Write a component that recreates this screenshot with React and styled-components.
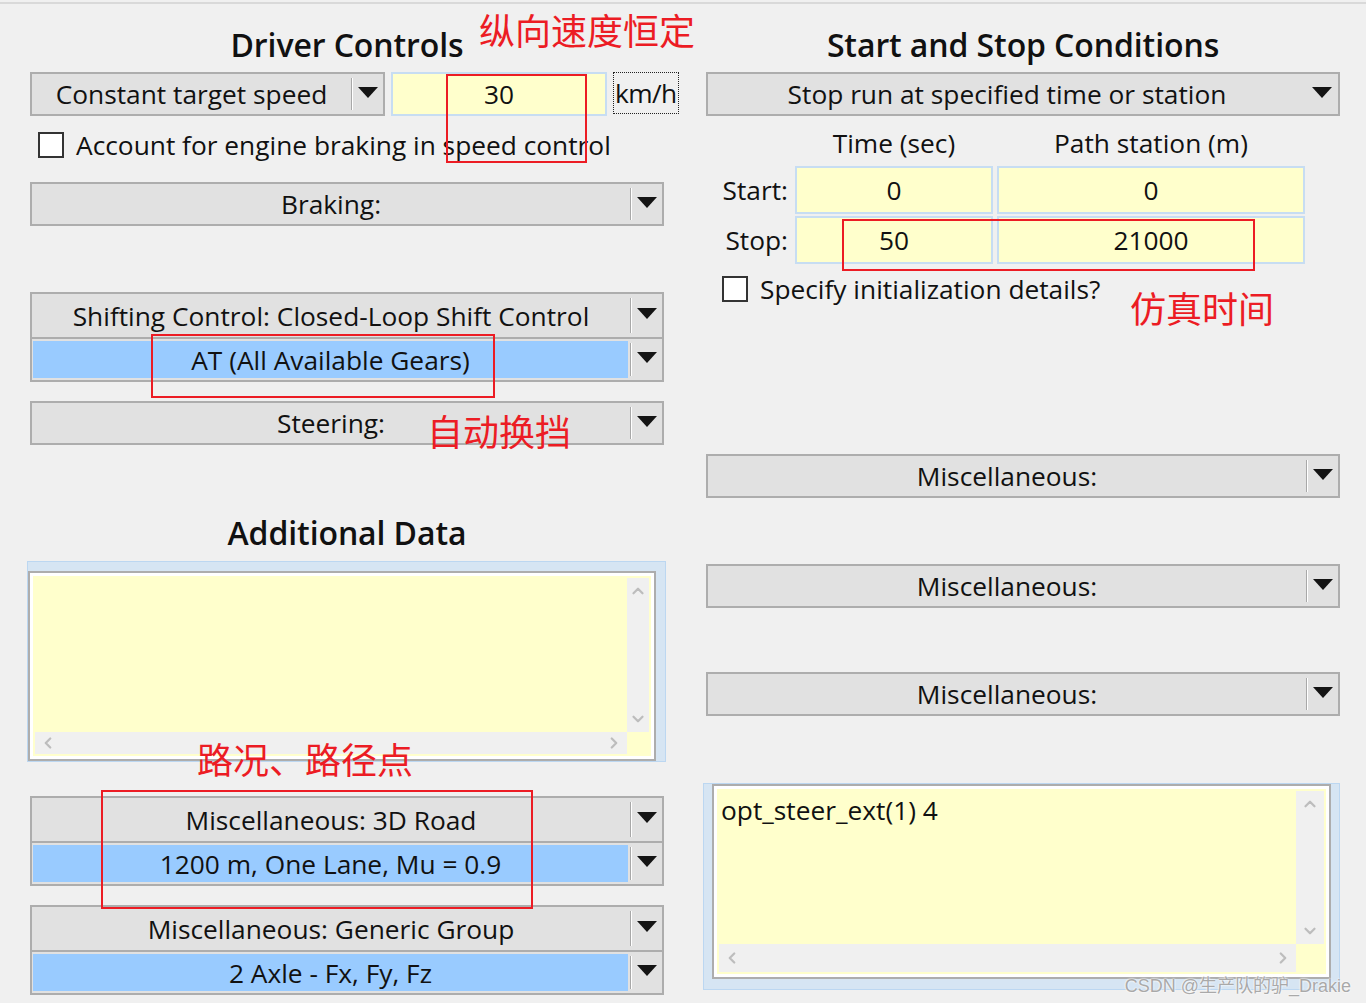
import React from 'react';
import styled, { createGlobalStyle } from 'styled-components';
import { ChevronUp, ChevronDown, ChevronLeft, ChevronRight } from 'lucide-react';

const GlobalStyle = createGlobalStyle`
  html, body {
    margin: 0;
    padding: 0;
    background: #f0f0f0;
    overflow: hidden;
  }
  * {
    box-sizing: border-box;
  }
`;

const UI_FONT = `"Open Sans", "Noto Sans", "Noto Sans CJK SC", sans-serif`;

const Page = styled.div`
  position: relative;
  width: 1366px;
  height: 1003px;
  margin-top: 2px;
  border-top: 2px solid #d9d9d9;
  font-family: ${UI_FONT};
  color: #111;
  display: grid;
  grid-template-columns: 634px 634px;
  column-gap: 42px;
  padding-left: 30px;
  align-items: start;
`;

const Column = styled.div`
  display: flex;
  flex-direction: column;
`;

const Heading = styled.h2`
  margin: 0;
  height: ${props => props.$height || 68}px;
  padding-top: ${props => props.$pad || 12}px;
  display: flex;
  align-items: center;
  justify-content: center;
  font-size: 32px;
  font-weight: 600;
  letter-spacing: -0.1px;
`;

const Row = styled.div`
  display: flex;
  align-items: stretch;
  gap: 6px;
  height: 44px;

  & > * {
    flex-shrink: 0;
  }
`;

const ComboBox = styled.div`
  display: flex;
  height: 44px;
  width: ${props => props.$width || '100%'};
  margin-top: ${props => props.$top || 0}px;
  border: 2px solid #adadad;
  background: #e1e1e1;
  font-size: 26.3px;
`;

const ComboGroup = styled.div`
  display: flex;
  flex-direction: column;
  margin-top: ${props => props.$top || 0}px;
  border: 2px solid #adadad;
  background: #e1e1e1;
  font-size: 26.3px;
`;

const GroupRow = styled.div`
  display: flex;
  height: 43px;

  & + & {
    border-top: 2px solid #adadad;
  }
`;

const ComboText = styled.div`
  flex: 1;
  display: flex;
  align-items: center;
  justify-content: center;
  white-space: nowrap;
  background: ${props => (props.$selected ? '#99cbff' : 'transparent')};
  margin: ${props => (props.$selected ? '2px 2px 2px 1px' : '0')};
`;

const ArrowBox = styled.div`
  width: 32px;
  margin: 4px 0;
  display: flex;
  align-items: center;
  justify-content: center;
  border-left: ${props => (props.$plain ? 'none' : '1px solid #a8a8a8')};
  box-shadow: ${props => (props.$plain ? 'none' : 'inset 1px 0 #ffffff')};
`;

const Arrow = styled.span`
  width: 0;
  height: 0;
  border-left: 10px solid transparent;
  border-right: 10px solid transparent;
  border-top: 11px solid #141414;
  margin-top: -4px;
`;

const Field = styled.div`
  display: flex;
  align-items: center;
  justify-content: center;
  width: ${props => props.$width || 'auto'};
  height: ${props => props.$height || 44}px;
  background: #ffffcc;
  border: 2px solid #c7ddf2;
  font-size: 26.3px;
`;

const UnitLabel = styled.div`
  display: flex;
  align-items: center;
  padding: 0 1px;
  border: 1px dotted #222;
  font-size: 26.3px;
  letter-spacing: -0.6px;
  margin-bottom: 2px;
`;

const CheckRow = styled.label`
  display: flex;
  align-items: center;
  gap: 12px;
  height: 30px;
  margin-top: ${props => props.$top || 0}px;
  padding-left: ${props => props.$indent || 0}px;
  font-size: 26.3px;
  white-space: nowrap;
`;

const CheckBox = styled.span`
  width: 26px;
  height: 26px;
  background: #ffffff;
  border: 2px solid #333333;
`;

const Conditions = styled.div`
  display: grid;
  grid-template-columns: 85px 198px 308px;
  grid-template-rows: 48px 48px 48px;
  column-gap: 4px;
  row-gap: 2px;
  font-size: 26.3px;
`;

const ColHead = styled.div`
  display: flex;
  align-items: center;
  justify-content: center;
  padding-top: 6px;
`;

const RowLabel = styled.div`
  display: flex;
  align-items: center;
  justify-content: flex-end;
  padding-right: 3px;
`;

const MemoFrame = styled.div`
  margin-top: ${props => props.$top || 0}px;
  margin-left: ${props => props.$left || 0}px;
  margin-right: ${props => props.$right || 0}px;
  background: #d6e5f3;
  border: 1px solid #bcd7f1;
  padding: ${props => props.$pad};
  height: ${props => props.$height}px;
  display: flex;
`;

const Memo = styled.div`
  flex: 1;
  border: 2px solid #adadad;
  background: #ffffff;
  padding: 3px;
  display: flex;
`;

const MemoBody = styled.div`
  flex: 1;
  background: #ffffcc;
  padding: 2px;
  display: grid;
  grid-template-columns: 1fr ${props => props.$bar}px;
  grid-template-rows: 1fr ${props => props.$bar}px;
`;

const MemoText = styled.div`
  font-size: 26.3px;
  padding: 4px 2px;
  line-height: 1.2;
`;

const ScrollTrack = styled.div`
  background: #f0f0f0;
  display: flex;
  flex-direction: ${props => (props.$vertical ? 'column' : 'row')};
  align-items: center;
  justify-content: space-between;
  padding: ${props => (props.$vertical ? '4px 0' : '0 4px')};
  color: #bdbdbd;
`;

const RedBox = styled.div`
  position: absolute;
  left: ${props => props.$x}px;
  top: ${props => props.$y}px;
  width: ${props => props.$w}px;
  height: ${props => props.$h}px;
  border: 2px solid #ec1c24;
  pointer-events: none;
`;

const RedNote = styled.div`
  position: absolute;
  left: ${props => props.$x}px;
  top: ${props => props.$y}px;
  font-family: "Noto Sans CJK SC", sans-serif;
  font-size: 36px;
  line-height: 1;
  color: #ec1c24;
  white-space: nowrap;
`;

const Watermark = styled.div`
  position: absolute;
  right: 15px;
  bottom: 8px;
  font-family: "Liberation Sans", "Noto Sans CJK SC", sans-serif;
  font-size: 18px;
  color: #a9a9a9;
  text-shadow: 0 0 2px #ffffff, 0 0 2px #ffffff;
  white-space: nowrap;
`;

const Combo = ({ label, width, top, plain }) => (
  <ComboBox $width={width} $top={top}>
    <ComboText>{label}</ComboText>
    <ArrowBox $plain={plain}>
      <Arrow />
    </ArrowBox>
  </ComboBox>
);

const Group = ({ top, items }) => (
  <ComboGroup $top={top}>
    {items.map((item, i) => (
      <GroupRow key={i}>
        <ComboText $selected={i === 1}>{item}</ComboText>
        <ArrowBox>
          <Arrow />
        </ArrowBox>
      </GroupRow>
    ))}
  </ComboGroup>
);

const Check = ({ label, top, indent }) => (
  <CheckRow $top={top} $indent={indent}>
    <CheckBox />
    {label}
  </CheckRow>
);

const ScrollMemo = ({ text, top, left, right, pad, height, bar }) => (
  <MemoFrame $top={top} $left={left} $right={right} $pad={pad} $height={height}>
    <Memo>
      <MemoBody $bar={bar}>
        <MemoText>{text}</MemoText>
        <ScrollTrack $vertical>
          <ChevronUp size={18} strokeWidth={3} />
          <ChevronDown size={18} strokeWidth={3} />
        </ScrollTrack>
        <ScrollTrack>
          <ChevronLeft size={18} strokeWidth={3} />
          <ChevronRight size={18} strokeWidth={3} />
        </ScrollTrack>
      </MemoBody>
    </Memo>
  </MemoFrame>
);

const App = () => (
  <>
    <GlobalStyle />
    <Page>
      <Column>
        <Heading>Driver Controls</Heading>
        <Row>
          <Combo label="Constant target speed" width="355px" />
          <Field $width="216px">30</Field>
          <UnitLabel>km/h</UnitLabel>
        </Row>
        <Check label="Account for engine braking in speed control" top={14} indent={8} />
        <Combo label="Braking:" top={22} />
        <Group
          top={66}
          items={['Shifting Control: Closed-Loop Shift Control', 'AT (All Available Gears)']}
        />
        <Combo label="Steering:" top={19} />
        <Heading $height={116} $pad={58}>Additional Data</Heading>
        <ScrollMemo text="" left={-3} right={-2} pad="9px 9px 0 0" height={201} bar={22} />
        <Group top={34} items={['Miscellaneous: 3D Road', '1200 m, One Lane, Mu = 0.9']} />
        <Group top={19} items={['Miscellaneous: Generic Group', '2 Axle - Fx, Fy, Fz']} />
      </Column>

      <Column>
        <Heading>Start and Stop Conditions</Heading>
        <Combo label="Stop run at specified time or station" plain />
        <Conditions>
          <span />
          <ColHead>Time (sec)</ColHead>
          <ColHead>Path station (m)</ColHead>
          <RowLabel>Start:</RowLabel>
          <Field $height={48}>0</Field>
          <Field $height={48}>0</Field>
          <RowLabel>Stop:</RowLabel>
          <Field $height={48}>50</Field>
          <Field $height={48}>21000</Field>
        </Conditions>
        <Check label="Specify initialization details?" top={10} indent={16} />
        <Combo label="Miscellaneous:" top={150} />
        <Combo label="Miscellaneous:" top={66} />
        <Combo label="Miscellaneous:" top={64} />
        <ScrollMemo
          text="opt_steer_ext(1) 4"
          top={67}
          left={-3}
          pad="0 8px 10px 8px"
          height={207}
          bar={28}
        />
      </Column>

      <RedNote $x={479} $y={7}>纵向速度恒定</RedNote>
      <RedBox $x={446} $y={70} $w={141} $h={89} />
      <RedNote $x={1130} $y={285}>仿真时间</RedNote>
      <RedBox $x={842} $y={215} $w={413} $h={52} />
      <RedNote $x={427} $y={408}>自动换挡</RedNote>
      <RedBox $x={151} $y={330} $w={344} $h={64} />
      <RedNote $x={197} $y={736}>路况、路径点</RedNote>
      <RedBox $x={101} $y={786} $w={432} $h={119} />
      <Watermark>CSDN @生产队的驴_Drakie</Watermark>
    </Page>
  </>
);

export default App;
